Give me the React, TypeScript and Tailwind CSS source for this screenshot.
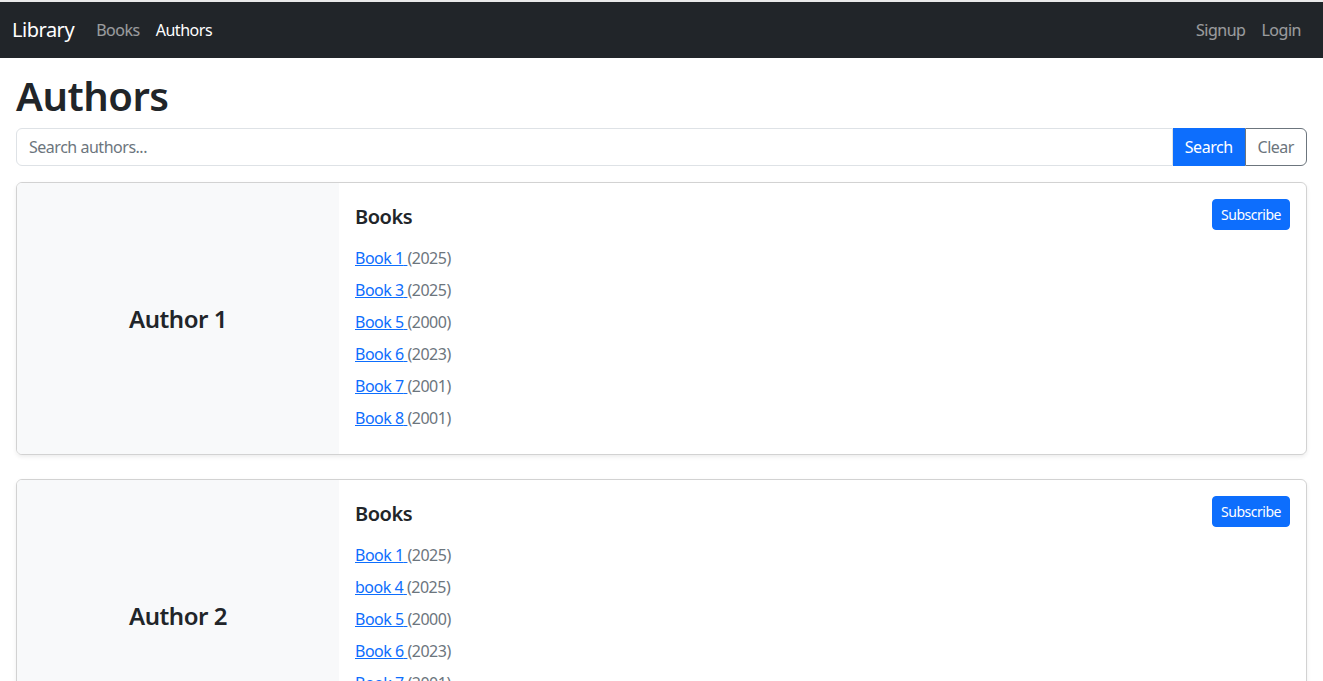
import React from 'react';

type Book = { title: string; year: number };
type Author = { name: string; books: Book[] };

const authors: Author[] = [
  {
    name: 'Author 1',
    books: [
      { title: 'Book 1', year: 2025 },
      { title: 'Book 3', year: 2025 },
      { title: 'Book 5', year: 2000 },
      { title: 'Book 6', year: 2023 },
      { title: 'Book 7', year: 2001 },
      { title: 'Book 8', year: 2001 },
    ],
  },
  {
    name: 'Author 2',
    books: [
      { title: 'Book 1', year: 2025 },
      { title: 'book 4', year: 2025 },
      { title: 'Book 5', year: 2000 },
      { title: 'Book 6', year: 2023 },
      { title: 'Book 7', year: 2001 },
      { title: 'Book 8', year: 2001 },
    ],
  },
];

function AuthorCard({ author }: { author: Author }) {
  return (
    <div className="mb-6 flex overflow-hidden rounded-md border border-black/[0.175] shadow-[0_2px_4px_rgba(0,0,0,0.075)]">
      <div className="flex w-[322px] shrink-0 items-center justify-center bg-[#f8f9fa]">
        <h4 className="text-[24px] font-semibold leading-tight">{author.name}</h4>
      </div>
      <div className="flex-1 p-4">
        <div className="mb-4 flex items-center justify-between">
          <h5 className="pt-[3px] text-[20px] font-semibold leading-tight">Books</h5>
          <button className="rounded border border-[#0d6efd] bg-[#0d6efd] px-2 py-1 text-[14px] leading-[21px] text-white">
            Subscribe
          </button>
        </div>
        <ul>
          {author.books.map((b, i) => (
            <li key={i} className="mb-2 leading-6">
              <a href="#" className="text-[#0d6efd] underline">
                {b.title}{' '}
              </a>
              <span className="text-[#6c757d]">({b.year})</span>
            </li>
          ))}
        </ul>
      </div>
    </div>
  );
}

export default function App() {
  return (
    <div className="min-h-screen bg-white text-[16px] tracking-[-0.03em] text-[#212529] font-['Segoe_UI','Noto_Sans',sans-serif]">
      <div className="h-[2px] bg-[#e9e9e9]" />
      <nav className="flex h-[56px] items-center justify-between bg-[#212529] px-3">
        <div className="flex items-center">
          <a href="#" className="mr-[14px] text-[20px] text-white">Library</a>
          <a href="#" className="px-2 text-white/55">Books</a>
          <a href="#" className="px-2 text-white">Authors</a>
        </div>
        <div className="flex items-center">
          <a href="#" className="px-2 text-white/55">Signup</a>
          <a href="#" className="pl-2 pr-[10px] text-white/55">Login</a>
        </div>
      </nav>
      <main className="px-4 pt-[14px]">
        <h1 className="mb-2 text-[40px] font-semibold leading-[1.2]">Authors</h1>
        <div className="mb-4 flex">
          <input
            placeholder="Search authors..."
            className="h-[38px] flex-1 rounded-l-md border border-[#dee2e6] px-3 text-[16px] placeholder:text-[#6c757d] outline-none"
          />
          <button className="h-[38px] bg-[#0d6efd] px-3 text-white">Search</button>
          <button className="h-[38px] rounded-r-md border border-[#6c757d] px-3 text-[#6c757d]">Clear</button>
        </div>
        {authors.map((a) => (
          <AuthorCard key={a.name} author={a} />
        ))}
      </main>
    </div>
  );
}
